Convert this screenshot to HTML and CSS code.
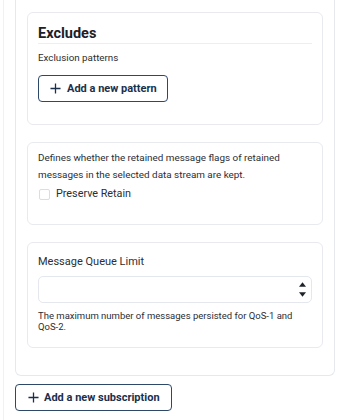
FILE: index.html
```html
<!DOCTYPE html>
<html>
<head>
<meta charset="utf-8">
<link rel="stylesheet" href="styles.css">
</head>
<body>
<div class="page">
  <div class="outer">
    <section class="card card-excludes">
      <div class="heading-wrap">
        <div class="heading">Excludes</div>
      </div>
      <p class="desc">Exclusion patterns</p>
      <button class="btn btn-pattern" type="button">
        <svg class="plus" viewBox="0 0 12 12" width="11" height="11"><path d="M6 0.5V11.5M0.5 6H11.5" stroke="#1b2f4b" stroke-width="1.4" fill="none"/></svg>
        <span>Add a new pattern</span>
      </button>
    </section>
    <section class="card card-retain">
      <p class="retain-text">Defines whether the retained message flags of retained messages in the selected data stream are kept.</p>
      <label class="check-row">
        <span class="checkbox"></span>
        <span class="check-label">Preserve Retain</span>
      </label>
    </section>
    <section class="card card-queue">
      <div class="field-label">Message Queue Limit</div>
      <div class="input">
        <div class="input-value"></div>
        <div class="spinner">
          <svg viewBox="0 0 8 5" width="7" height="5"><path d="M0 5L4 0L8 5Z" fill="#1f2329"/></svg>
          <svg viewBox="0 0 8 5" width="7" height="5"><path d="M0 0L4 5L8 0Z" fill="#1f2329"/></svg>
        </div>
      </div>
      <p class="help">The maximum number of messages persisted for QoS-1 and QoS-2.</p>
    </section>
  </div>
  <button class="btn btn-sub" type="button">
    <svg class="plus" viewBox="0 0 12 12" width="11" height="11"><path d="M6 0.5V11.5M0.5 6H11.5" stroke="#1b2f4b" stroke-width="1.4" fill="none"/></svg>
    <span>Add a new subscription</span>
  </button>
</div>
</body>
</html>
```
FILE: styles.css
```css
html, body {
  margin: 0;
  padding: 0;
  background: #ffffff;
}
body {
  font-family: Roboto, "Liberation Sans", sans-serif;
  color: #1f2329;
  width: 346px;
  height: 420px;
  overflow: hidden;
}
.page {
  border-left: 1px solid #f0f1f4;
  margin-left: 3px;
  padding-left: 11px;
  min-height: 420px;
  box-sizing: border-box;
}
.outer {
  width: 320px;
  box-sizing: border-box;
  border: 1px solid #e6e8ee;
  border-top: none;
  border-radius: 0 0 6px 6px;
  padding: 12px 11px 27px 11px;
  display: flex;
  flex-direction: column;
  gap: 17px;
}
.card {
  border: 1px solid #e8eaef;
  border-radius: 6px;
  padding: 0 10px;
  box-sizing: border-box;
}
.card-excludes {
  padding-top: 12px;
  height: 113px;
}
.heading-wrap {
  height: 18px;
  box-sizing: border-box;
  box-shadow: 0 1px 0 0 #eceef3;
}
.heading {
  font-size: 14.5px;
  font-weight: 700;
  line-height: 17px;
  color: #1c2028;
}
.desc {
  margin: 8px 0 0 0;
  font-size: 9.8px;
  line-height: 14px;
  color: #2a2e35;
}
.btn {
  display: flex;
  align-items: center;
  background: #ffffff;
  border: 1px solid #2d4868;
  border-radius: 4px;
  height: 27px;
  box-sizing: border-box;
  font-family: Roboto, "Liberation Sans", sans-serif;
  font-weight: 700;
  font-size: 11px;
  color: #1b2f4b;
  cursor: pointer;
}
.btn-pattern {
  margin-top: 10px;
  padding: 0 10px 0 11px;
  gap: 6px;
}
.card-retain {
  padding-top: 6px;
  height: 83px;
}
.retain-text {
  margin: 0;
  font-size: 9.9px;
  line-height: 17px;
  color: #2a2e35;
}
.check-row {
  display: flex;
  align-items: center;
  gap: 6px;
  margin-top: 3px;
  height: 16px;
}
.checkbox {
  width: 9px;
  height: 9px;
  border: 1px solid #d9dde5;
  border-radius: 2px;
  background: #fff;
  margin-left: 1px;
}
.check-label {
  font-size: 10.8px;
  line-height: 16px;
  color: #2a2e35;
}
.card-queue {
  padding-top: 11px;
  height: 106px;
}
.field-label {
  font-size: 11px;
  line-height: 16px;
  color: #2a2e35;
}
.input {
  margin-top: 6px;
  height: 27px;
  box-sizing: border-box;
  border: 1px solid #e4e7ee;
  border-radius: 5px;
  display: flex;
  align-items: stretch;
}
.input-value {
  flex: 1;
}
.spinner {
  width: 16px;
  display: flex;
  flex-direction: column;
  align-items: center;
  justify-content: space-between;
  padding: 5px 0 5px 0;
  margin-right: 1px;
}
.help {
  margin: 7px 0 0 0;
  font-size: 9.5px;
  line-height: 11px;
  color: #2a2e35;
}
.btn-sub {
  margin-top: 8px;
  padding: 0 11px 0 12px;
  gap: 5px;
  height: 27px;
}
```
